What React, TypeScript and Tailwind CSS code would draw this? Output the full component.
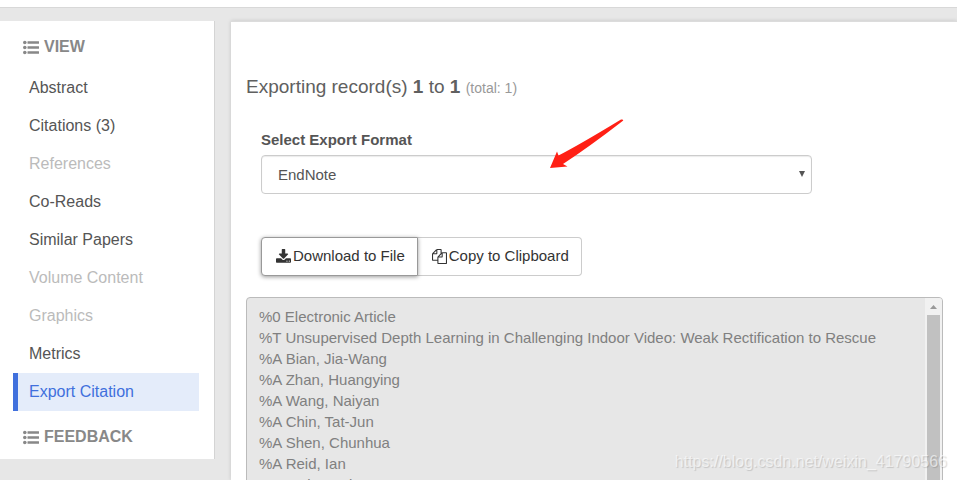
import React from "react";

const navItems = [
  { label: "Abstract", state: "normal" },
  { label: "Citations (3)", state: "normal" },
  { label: "References", state: "disabled" },
  { label: "Co-Reads", state: "normal" },
  { label: "Similar Papers", state: "normal" },
  { label: "Volume Content", state: "disabled" },
  { label: "Graphics", state: "disabled" },
  { label: "Metrics", state: "normal" },
  { label: "Export Citation", state: "active" },
];

const navStyles: Record<string, string> = {
  normal: "border-transparent text-[#555]",
  disabled: "border-transparent text-[#bbb]",
  active: "border-[#4070dd] bg-[#e4ecfa] text-[#4070dd]",
};

const citation = [
  "%0 Electronic Article",
  "%T Unsupervised Depth Learning in Challenging Indoor Video: Weak Rectification to Rescue",
  "%A Bian, Jia-Wang",
  "%A Zhan, Huangying",
  "%A Wang, Naiyan",
  "%A Chin, Tat-Jun",
  "%A Shen, Chunhua",
  "%A Reid, Ian",
  "%J arXiv e-prints",
].join("\n");

function ListIcon() {
  return (
    <svg className="h-4 w-4 shrink-0" viewBox="0 0 16 16" fill="currentColor" aria-hidden="true">
      <circle cx="1.8" cy="3.5" r="1.8" />
      <circle cx="1.8" cy="8.5" r="1.8" />
      <circle cx="1.8" cy="13.5" r="1.8" />
      <rect x="4.500" y="2.200" width="11.500" height="2.600" rx="0.3" />
      <rect x="4.500" y="7.200" width="11.500" height="2.600" rx="0.3" />
      <rect x="4.500" y="12.200" width="11.500" height="2.600" rx="0.3" />
    </svg>
  );
}

function DownloadIcon() {
  return (
    <svg className="h-[15px] w-[15px] shrink-0" viewBox="0 0 1664 1664" fill="currentColor" aria-hidden="true">
      <path d="M1280 1344q0-26-19-45t-45-19-45 19-19 45 19 45 45 19 45-19 19-45zm256 0q0-26-19-45t-45-19-45 19-19 45 19 45 45 19 45-19 19-45zm128-224v320q0 40-28 68t-68 28h-1472q-40 0-68-28t-28-68v-320q0-40 28-68t68-28h465l135 136q58 56 136 56t136-56l136-136h464q40 0 68 28t28 68zm-325-569q17 41-14 70l-448 448q-18 19-45 19t-45-19l-448-448q-31-29-14-70 17-39 59-39h256v-448q0-26 19-45t45-19h256q26 0 45 19t19 45v448h256q42 0 59 39z" />
    </svg>
  );
}

function CopyIcon() {
  return (
    <svg className="h-[15px] w-[15px] shrink-0" viewBox="0 0 1792 1792" fill="currentColor" aria-hidden="true">
      <path d="M1696 384q40 0 68 28t28 68v1216q0 40-28 68t-68 28h-960q-40 0-68-28t-28-68v-288h-544q-40 0-68-28t-28-68v-672q0-40 20-88t48-76l408-408q28-28 76-48t88-20h416q40 0 68 28t28 68v328q68-40 128-40h416zm-544 213l-299 299h299v-299zm-640-384l-299 299h299v-299zm196 647l316-316v-416h-384v416q0 40-28 68t-68 28h-416v640h512v-256q0-40 20-88t48-76zm956 804v-1152h-384v416q0 40-28 68t-68 28h-416v640h896z" />
    </svg>
  );
}

function SectionHeading({ children }: { children: React.ReactNode }) {
  return (
    <h2 className="flex h-12 items-center gap-[5px] pt-1 pl-[23px] text-base font-bold text-[#888]">
      <ListIcon />
      {children}
    </h2>
  );
}

export default function App() {
  return (
    <div className="relative flex h-screen flex-col overflow-hidden bg-[#e7e7e7] font-['Liberation_Sans',Arial,sans-serif] text-[#555]">
      <header className="h-2 shrink-0 border-b border-[#d8d8d8] bg-white" />
      <div className="flex min-h-0 flex-1 items-start gap-4 pt-[13px]">
        <aside className="w-[215px] shrink-0 border-r border-[#d4d4d4] bg-white">
          <SectionHeading>VIEW</SectionHeading>
          <nav className="pr-[15px] pl-[13px]">
            {navItems.map((item) => (
              <a
                key={item.label}
                href="#"
                className={`block border-l-5 py-2 pl-[11px] text-base leading-[22px] ${navStyles[item.state]}`}
              >
                {item.label}
              </a>
            ))}
          </nav>
          <SectionHeading>FEEDBACK</SectionHeading>
        </aside>

        <main className="min-w-0 flex-1 self-stretch border-t border-[#dcdcdc] bg-white pt-[53px] pr-[14px] pl-[15px] shadow-[0_0_4px_rgba(0,0,0,0.15)]">
          <h1 className="text-[19px] leading-6 text-[#606060]">
            Exporting record(s) <b>1</b> to <b>1</b> <small className="text-sm text-[#999]">(total: 1)</small>
          </h1>

          <div className="px-[15px]">
            <div className="relative mt-[30px] max-w-[551px]">
              <label htmlFor="format" className="block text-[15px] leading-[21px] font-bold">
                Select Export Format
              </label>
              <div className="relative mt-[5px]">
                <select
                  id="format"
                  className="block h-[39px] w-full appearance-none rounded border border-[#ccc] bg-white pt-[2px] pl-4 text-[15px] shadow-[inset_0_1px_1px_rgba(0,0,0,0.08)]"
                >
                  <option>EndNote</option>
                </select>
                <svg className="pointer-events-none absolute top-4 right-[7px] h-[6px] w-[6px]" viewBox="0 0 6 6" fill="currentColor" aria-hidden="true">
                  <path d="M0 0h6L3 6z" />
                </svg>
              </div>
              <svg className="pointer-events-none absolute -top-[10px] right-[188px] h-[50px] w-[75px]" viewBox="0 0 75 50" fill="#ff2015" aria-hidden="true">
                <path d="M1 49L8 32.500L9.500 36.500Q30 26 72 .5Q76 0 73 2.500Q40 28 14 45L18.500 47.500Z" />
              </svg>
            </div>

            <div className="mt-[43px] flex text-[15px] text-[#333]">
              <button type="button" className="relative flex h-[39px] items-center gap-[2px] rounded-l border border-[#999] bg-white pr-3 pl-[14px] shadow-[0_1px_4px_rgba(0,0,0,0.4)]">
                <DownloadIcon />
                Download to File
              </button>
              <button type="button" className="flex h-[39px] items-center gap-[2px] rounded-r border border-l-0 border-[#ccc] bg-white pr-3 pl-[14px]">
                <CopyIcon />
                Copy to Clipboard
              </button>
            </div>
          </div>

          <div className="mt-[21px] flex h-[320px] overflow-hidden rounded border border-[#bbb] bg-[#e7e7e7]">
            <textarea
              readOnly
              aria-label="Exported citation"
              value={citation}
              className="h-full min-w-0 flex-1 resize-none overflow-hidden bg-transparent px-3 py-2 text-[15px] leading-[21px] text-[#808080]"
            />
            <div className="flex w-[17px] flex-col items-center bg-[#f1f1f1]" aria-hidden="true">
              <svg className="h-[17px] w-[17px] shrink-0" viewBox="0 0 17 17" fill="#999">
                <path d="M5 11h7L8.500 7z" />
              </svg>
              <div className="w-[13px] flex-1 bg-[#c1c1c1]" />
            </div>
          </div>
        </main>
      </div>
      <span className="pointer-events-none absolute right-[10px] bottom-2 text-base leading-5 text-white/60 [text-shadow:1px_1px_1px_rgba(0,0,0,0.15)]">
        https://blog.csdn.net/weixin_41790566
      </span>
    </div>
  );
}
